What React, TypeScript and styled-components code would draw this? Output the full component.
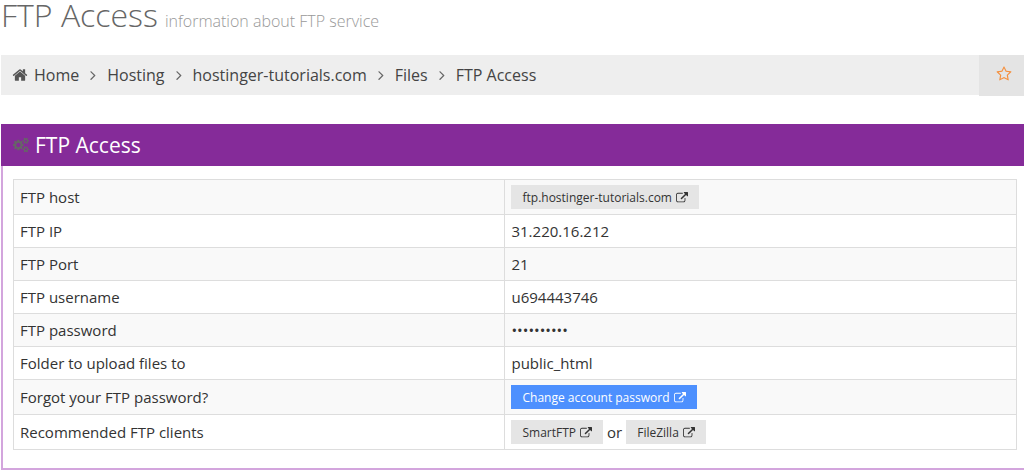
import React from "react";
import styled, { createGlobalStyle } from "styled-components";

const GlobalStyle = createGlobalStyle`
  *, *::before, *::after { box-sizing: border-box; }
  body {
    margin: 0;
    background: #fff;
    color: #333;
    font-family: "Open Sans", "Liberation Sans", sans-serif;
    font-size: 14px;
    line-height: 22px;
  }
`;

const icons = {
  home: {
    box: "0 0 1792 1792",
    d: "M1472 992v480q0 26-19 45t-45 19h-384v-384h-256v384h-384q-26 0-45-19t-19-45v-480q0-1 .5-3t.5-3l575-474 575 474q1 2 1 6zm223-69l-62 74q-8 9-21 11h-3q-13 0-21-7l-692-577-692 577q-12 8-24 7-13-2-21-11l-62-74q-8-10-7-23.5t11-21.5l719-599q32-26 76-26t76 26l244 204v-195q0-14 9-23t23-9h192q14 0 23 9t9 23v408l219 182q10 8 11 21.5t-7 23.5z",
  },
  angle: {
    box: "0 0 1792 1792",
    d: "M1171 960q0 13-10 23l-466 466q-10 10-23 10t-23-10l-50-50q-10-10-10-23t10-23l393-393-393-393q-10-10-10-23t10-23l50-50q10-10 23-10t23 10l466 466q10 10 10 23z",
  },
  star: {
    box: "0 0 1792 1792",
    d: "M1201 1004l306-297-422-62-189-382-189 382-422 62 306 297-73 421 378-199 377 199zm527-357q0 22-26 48l-363 354 86 500q1 7 1 20 0 50-41 50-19 0-40-12l-449-236-449 236q-22 12-40 12-21 0-31.5-14.5t-10.5-35.5q0-6 2-20l86-500-364-354q-25-27-25-48 0-37 56-46l502-73 225-455q19-41 49-41t49 41l225 455 502 73q56 9 56 46z",
  },
  external: {
    box: "0 0 1792 1792",
    d: "M1408 928v320q0 119-84.5 203.5t-203.5 84.5h-832q-119 0-203.5-84.5t-84.5-203.5v-832q0-119 84.5-203.5t203.5-84.5h704q14 0 23 9t9 23v64q0 14-9 23t-23 9h-704q-66 0-113 47t-47 113v832q0 66 47 113t113 47h832q66 0 113-47t47-113v-320q0-14 9-23t23-9h64q14 0 23 9t9 23zm384-864v512q0 26-19 45t-45 19-45-19l-176-176-652 652q-10 10-23 10t-23-10l-114-114q-10-10-10-23t10-23l652-652-176-176q-19-19-19-45t19-45 45-19h512q26 0 45 19t19 45z",
  },
  cogs: {
    box: "0 0 1920 1792",
    d: "M896 896q0-106-75-181t-181-75-181 75-75 181 75 181 181 75 181-75 75-181zm768 512q0-52-38-90t-90-38-90 38-38 90q0 53 37.5 90.5t90.5 37.5 90.5-37.5 37.5-90.5zm0-1024q0-52-38-90t-90-38-90 38-38 90q0 53 37.5 90.5t90.5 37.5 90.5-37.5 37.5-90.5zm-384 421v185q0 10-7 19.5t-16 10.5l-155 24q-11 35-32 76 34 48 90 115 7 11 7 20 0 12-7 19-23 30-82.5 89.5t-78.5 59.5q-11 0-21-7l-115-90q-37 19-77 31-11 108-23 155-7 24-30 24h-186q-11 0-20-7.5t-10-17.5l-23-153q-34-10-75-31l-118 89q-7 7-20 7-11 0-21-8-144-133-144-160 0-9 7-19 10-14 41-53t47-61q-23-44-35-82l-152-24q-10-1-17-9.5t-7-19.5v-185q0-10 7-19.5t16-10.5l155-24q11-35 32-76-34-48-90-115-7-11-7-20 0-12 7-20 22-30 82-89t79-59q11 0 21 7l115 90q34-18 77-32 11-108 23-154 7-24 30-24h186q11 0 20 7.5t10 17.5l23 153q34 10 75 31l118-89q8-7 20-7 11 0 21 8 144 133 144 160 0 8-7 19-12 16-42 54t-45 60q23 48 34 82l152 23q10 2 17 10.5t7 19.5zm640 533v140q0 16-149 31-12 27-30 52 51 113 51 138 0 4-4 7-122 71-124 71-8 0-46-47t-52-68q-20 2-30 2t-30-2q-14 21-52 68t-46 47q-2 0-124-71-4-3-4-7 0-25 51-138-18-25-30-52-149-15-149-31v-140q0-16 149-31 13-29 30-52-51-113-51-138 0-4 4-7 4-2 35-20t59-34 30-16q8 0 46 46.5t52 67.5q20-2 30-2t30 2q51-71 92-112l6-2q4 0 124 70 4 3 4 7 0 25-51 138 17 23 30 52 149 15 149 31zm0-1024v140q0 16-149 31-12 27-30 52 51 113 51 138 0 4-4 7-122 71-124 71-8 0-46-47t-52-68q-20 2-30 2t-30-2q-14 21-52 68t-46 47q-2 0-124-71-4-3-4-7 0-25 51-138-18-25-30-52-149-15-149-31v-140q0-16 149-31 13-29 30-52-51-113-51-138 0-4 4-7 4-2 35-20t59-34 30-16q8 0 46 46.5t52 67.5q20-2 30-2t30 2q51-71 92-112l6-2q4 0 124 70 4 3 4 7 0 25-51 138 17 23 30 52 149 15 149 31z",
  },
};

const Svg = styled.svg<{ $size: number }>`
  display: block;
  flex: none;
  width: ${(p) => p.$size}px;
  height: ${(p) => p.$size}px;
  fill: currentColor;
`;

function Icon({ name, size }: { name: keyof typeof icons; size: number }) {
  return (
    <Svg $size={size} viewBox={icons[name].box} aria-hidden="true">
      <path d={icons[name].d} />
    </Svg>
  );
}

const Page = styled.main`
  padding-left: 1px;
`;

const PageTitle = styled.h1`
  display: flex;
  align-items: baseline;
  gap: 7px;
  margin: 0 0 25px;
  color: #666;
  font-size: 32px;
  font-weight: 300;
  line-height: 30px;
`;

const Subtitle = styled.small`
  color: #999;
  font-size: 16px;
  line-height: 16px;
`;

const Bar = styled.nav`
  display: flex;
  justify-content: space-between;
  height: 40px;
  margin-bottom: 29px;
  background: #eee;
`;

const Crumbs = styled.ol`
  display: flex;
  align-items: center;
  margin: 0;
  padding: 0 0 0 11px;
  list-style: none;
  color: #444;
  font-size: 16px;
`;

const Crumb = styled.li`
  display: flex;
  align-items: center;
`;

const Separator = styled.span`
  display: flex;
  justify-content: center;
  width: 28px;
  color: #666;
`;

const CrumbLink = styled.a`
  display: flex;
  align-items: center;
  gap: 6px;
  color: #444;
  text-decoration: none;

  svg {
    color: #555;
  }
`;

const StarButton = styled.button`
  display: flex;
  align-items: center;
  justify-content: center;
  width: 45px;
  height: 41px;
  padding: 0 0 4px 4px;
  border: 0;
  background: #e4e4e4;
  color: #f58f3c;
`;

const Panel = styled.section`
  border: solid #d3a5dd;
  border-width: 0 0 2px 2px;
`;

const PanelHeader = styled.header`
  display: flex;
  align-items: center;
  gap: 6px;
  height: 42px;
  margin-left: -2px;
  padding-left: 12px;
  background: #852b99;
  color: #666;
`;

const PanelTitle = styled.h2`
  margin: 0;
  color: #fff;
  font-size: 21px;
  font-weight: 400;
`;

const PanelBody = styled.div`
  padding: 13px 7px 18px 10px;
`;

const Table = styled.table`
  width: 100%;
  table-layout: fixed;
  border-collapse: collapse;
  font-size: 15px;
`;

const Row = styled.tr`
  &:nth-child(odd) {
    background: #f9f9f9;
  }
`;

const Label = styled.th`
  width: 49%;
  padding: 5px 6px;
  border: 1px solid #ddd;
  font-weight: 400;
  text-align: left;
`;

const Value = styled.td`
  padding: 5px 6px;
  border: 1px solid #ddd;
`;

const Actions = styled.div`
  display: flex;
  align-items: center;
  gap: 4px;
`;

const ActionLink = styled.a<{ $primary?: boolean }>`
  display: flex;
  align-items: center;
  gap: 4px;
  height: 24px;
  padding: 2px 11px 0;
  background: ${(p) => (p.$primary ? "#4d90fe" : "#e5e5e5")};
  color: ${(p) => (p.$primary ? "#fff" : "#333")};
  font-size: 12px;
  text-decoration: none;
`;

function Action({ text, primary }: { text: string; primary?: boolean }) {
  return (
    <ActionLink href="#" $primary={primary}>
      {text}
      <Icon name="external" size={12} />
    </ActionLink>
  );
}

const crumbs = ["Home", "Hosting", "hostinger-tutorials.com", "Files"];

const rows: [string, React.ReactNode][] = [
  ["FTP host", <Actions><Action text="ftp.hostinger-tutorials.com" /></Actions>],
  ["FTP IP", "31.220.16.212"],
  ["FTP Port", "21"],
  ["FTP username", "u694443746"],
  ["FTP password", "••••••••••"],
  ["Folder to upload files to", "public_html"],
  ["Forgot your FTP password?", <Actions><Action text="Change account password" primary /></Actions>],
  [
    "Recommended FTP clients",
    <Actions>
      <Action text="SmartFTP" />
      <span>or</span>
      <Action text="FileZilla" />
    </Actions>,
  ],
];

export default function App() {
  return (
    <Page>
      <GlobalStyle />
      <PageTitle>
        FTP Access
        <Subtitle>information about FTP service</Subtitle>
      </PageTitle>
      <Bar aria-label="Breadcrumb">
        <Crumbs>
          {crumbs.map((crumb, i) => (
            <Crumb key={crumb}>
              <CrumbLink href="#">
                {i === 0 && <Icon name="home" size={16} />}
                {crumb}
              </CrumbLink>
              <Separator>
                <Icon name="angle" size={16} />
              </Separator>
            </Crumb>
          ))}
          <Crumb aria-current="page">FTP Access</Crumb>
        </Crumbs>
        <StarButton type="button" aria-label="Add to favorites">
          <Icon name="star" size={16} />
        </StarButton>
      </Bar>
      <Panel>
        <PanelHeader>
          <Icon name="cogs" size={16} />
          <PanelTitle>FTP Access</PanelTitle>
        </PanelHeader>
        <PanelBody>
          <Table>
            <tbody>
              {rows.map(([label, value]) => (
                <Row key={label}>
                  <Label scope="row">{label}</Label>
                  <Value>{value}</Value>
                </Row>
              ))}
            </tbody>
          </Table>
        </PanelBody>
      </Panel>
    </Page>
  );
}
